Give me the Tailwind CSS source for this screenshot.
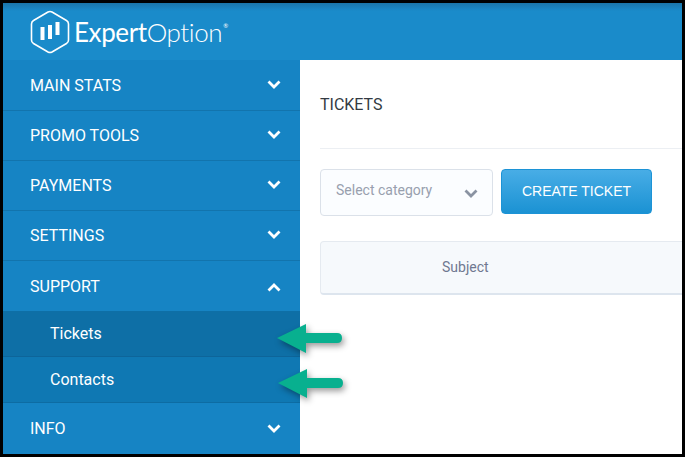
<!DOCTYPE html>
<html lang="en">
<head>
    <meta charset="UTF-8">
    <title>Tickets</title>
    <script src="https://cdn.jsdelivr.net/npm/@tailwindcss/browser@4"></script>
</head>
<body class="bg-black overflow-hidden font-['Roboto',sans-serif]">
    <div class="relative w-[685px] h-[457px] bg-black pl-[3px] pt-[3px] pr-[3px] pb-[3px] overflow-hidden">
        <div class="w-full h-full flex flex-col bg-white overflow-hidden">
            <!-- Header -->
            <header class="h-[57px] shrink-0 flex items-center pl-[27px] bg-[linear-gradient(#1b74a8,#1a8bca_8px,#1a8bca)]">
                <svg class="w-[40px] h-[44px]" viewBox="0 0 40 44" fill="none">
                    <path d="M18 2 Q20 1 22 2 L36.5 10.5 Q38.5 11.6 38.5 14 V30 Q38.5 32.4 36.5 33.5 L22 42 Q20 43 18 42 L3.5 33.5 Q1.5 32.4 1.5 30 V14 Q1.5 11.6 3.5 10.5 Z" stroke="#fff" stroke-width="1.6"/>
                    <rect x="10.5" y="17" width="4" height="13" fill="#fff"/>
                    <rect x="18" y="15" width="4" height="14" fill="#fff"/>
                    <rect x="25.5" y="12" width="4" height="13" fill="#fff"/>
                </svg>
                <div class="ml-[4px] flex items-start text-white font-['Lato',sans-serif] text-[26px] leading-none tracking-[-0.4px]">
                    <span class="font-normal">Expert</span><span class="font-light">Option</span><span class="text-[6px] mt-[4px] ml-[1px]">®</span>
                </div>
            </header>

            <div class="flex flex-1 min-h-0">
                <!-- Sidebar -->
                <nav class="w-[297px] shrink-0 bg-[#1684c4] text-white text-[16px]">
                    <div class="h-[50px] flex items-center justify-between pl-[27px] pr-[19px] pt-[1px]">
                        <span>MAIN STATS</span>
                        <svg class="w-[14px] h-[10px] -mt-[2px]" viewBox="0 0 14 10" fill="none"><path d="M1.5 1.5 L7 7 L12.5 1.5" stroke="#fff" stroke-width="2.8"/></svg>
                    </div>
                    <div class="h-[50px] flex items-center justify-between pl-[27px] pr-[19px] border-t border-[#1274ad]">
                        <span>PROMO TOOLS</span>
                        <svg class="w-[14px] h-[10px] -mt-[2px]" viewBox="0 0 14 10" fill="none"><path d="M1.5 1.5 L7 7 L12.5 1.5" stroke="#fff" stroke-width="2.8"/></svg>
                    </div>
                    <div class="h-[50px] flex items-center justify-between pl-[27px] pr-[19px] border-t border-[#1274ad]">
                        <span>PAYMENTS</span>
                        <svg class="w-[14px] h-[10px] -mt-[2px]" viewBox="0 0 14 10" fill="none"><path d="M1.5 1.5 L7 7 L12.5 1.5" stroke="#fff" stroke-width="2.8"/></svg>
                    </div>
                    <div class="h-[50px] flex items-center justify-between pl-[27px] pr-[19px] border-t border-[#1274ad]">
                        <span>SETTINGS</span>
                        <svg class="w-[14px] h-[10px] -mt-[2px]" viewBox="0 0 14 10" fill="none"><path d="M1.5 1.5 L7 7 L12.5 1.5" stroke="#fff" stroke-width="2.8"/></svg>
                    </div>
                    <div class="h-[51px] flex items-center justify-between pl-[27px] pr-[19px] pt-[1px] border-t border-[#1274ad]">
                        <span>SUPPORT</span>
                        <svg class="w-[14px] h-[10px]" viewBox="0 0 14 10" fill="none"><path d="M1.5 8.5 L7 3 L12.5 8.5" stroke="#fff" stroke-width="2.8"/></svg>
                    </div>
                    <div class="h-[46px] flex items-center pl-[47px] bg-[#0e6fa6] border-b border-[#0d659a]">Tickets</div>
                    <div class="h-[46px] flex items-center pl-[47px] bg-[#0f78b3] border-b border-[#0d6ca3]">Contacts</div>
                    <div class="h-[51px] flex items-center justify-between pl-[27px] pr-[19px]">
                        <span>INFO</span>
                        <svg class="w-[14px] h-[10px]" viewBox="0 0 14 10" fill="none"><path d="M1.5 1.5 L7 7 L12.5 1.5" stroke="#fff" stroke-width="2.8"/></svg>
                    </div>
                </nav>

                <!-- Main Content -->
                <main class="flex-1 min-w-0 pl-[20px]">
                    <h1 class="h-[89px] flex items-center pt-[2px] border-b border-[#eceff3] text-[16px] text-[#333a42]">TICKETS</h1>
                    <div class="mt-[20px] flex gap-[8px]">
                        <div class="w-[173px] h-[47px] pl-[15px] pr-[14px] flex items-center justify-between bg-[#fbfdff] border border-[#dbe1e9] rounded-[4px] text-[14px] text-[#98a0ae]">
                            <span class="-mt-[4px]">Select category</span>
                            <svg class="w-[14px] h-[10px] mt-[3px]" viewBox="0 0 14 10" fill="none"><path d="M1.5 1.5 L7 7 L12.5 1.5" stroke="#8a93a2" stroke-width="2.8"/></svg>
                        </div>
                        <button class="w-[151px] h-[45px] rounded-[4px] border border-[#1c93d6] bg-[linear-gradient(#48ade6,#1b92d3)] text-white text-[14px] font-['Liberation_Sans',sans-serif]">CREATE TICKET</button>
                    </div>
                    <div class="mt-[25px] h-[54px] w-[500px] pl-[121px] flex items-center bg-[#f6f9fc] border border-[#e5eaf0] border-b-2 border-b-[#dde5ee] rounded-[4px] text-[14px] text-[#6f7890]">Subject</div>
                </main>
            </div>
        </div>

        <!-- Arrows -->
        <svg class="absolute left-[272px] top-[320px] w-[76px] h-[40px] drop-shadow-[2px_3px_3px_rgba(0,0,0,0.4)]" viewBox="0 0 76 40" fill="none">
            <path d="M5 18 L34 4 V13 H65 Q70 13 70 18 Q70 23 65 23 H34 V33 Z" fill="#08b08f"/>
        </svg>
        <svg class="absolute left-[273px] top-[365px] w-[76px] h-[40px] drop-shadow-[2px_3px_3px_rgba(0,0,0,0.4)]" viewBox="0 0 76 40" fill="none">
            <path d="M5 18 L34 4 V13 H65 Q70 13 70 18 Q70 23 65 23 H34 V33 Z" fill="#08b08f"/>
        </svg>
    </div>
</body>
</html>
